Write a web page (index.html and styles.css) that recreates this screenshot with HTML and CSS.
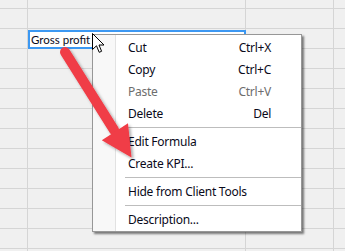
FILE: index.html
```html
<!DOCTYPE html>
<html>
<head>
<meta charset="utf-8">
<link rel="stylesheet" href="styles.css">
</head>
<body>
<div class="sheet">
  <div class="cell">Gross profit Margin</div>

  <div class="menu">
    <div class="item"><span>Cut</span><span class="key">Ctrl+X</span></div>
    <div class="item"><span>Copy</span><span class="key">Ctrl+C</span></div>
    <div class="item disabled"><span>Paste</span><span class="key">Ctrl+V</span></div>
    <div class="item"><span>Delete</span><span class="key">Del</span></div>
    <div class="sep"></div>
    <div class="item"><span>Edit Formula</span></div>
    <div class="item"><span>Create KPI...</span></div>
    <div class="sep"></div>
    <div class="item"><span>Hide from Client Tools</span></div>
    <div class="sep"></div>
    <div class="item"><span>Description...</span></div>
  </div>

  <svg class="cursor" width="13" height="21" viewBox="0 0 13 21">
    <path d="M0.5 0.5 L0.5 16.5 L4.5 12.8 L7.2 19.3 L9.6 18.3 L7 12 L12 12 Z" fill="#fff" stroke="#000" stroke-width="1" stroke-linejoin="miter"/>
  </svg>

  <svg class="arrow" width="345" height="251" viewBox="0 0 345 251">
    <defs>
      <filter id="sh" x="-20%" y="-20%" width="140%" height="140%">
        <feDropShadow dx="2" dy="2" stdDeviation="1.5" flood-color="#000" flood-opacity="0.35"/>
      </filter>
    </defs>
    <g filter="url(#sh)">
      <line x1="65" y1="52" x2="114" y2="130" stroke="#f03c46" stroke-width="10" stroke-linecap="round"/>
      <polygon points="101.8,140.2 128,123.3 131.5,157.5" fill="#f03c46"/>
    </g>
  </svg>
</div>
</body>
</html>
```

FILE: styles.css
```css
html, body {
  margin: 0;
  padding: 0;
}
body {
  width: 345px;
  height: 251px;
  overflow: hidden;
  font-family: "Noto Sans", "Liberation Sans", sans-serif;
}
.sheet {
  position: relative;
  width: 345px;
  height: 251px;
  background-color: #f0f0f0;
  background-image:
    linear-gradient(to right,
      transparent 27px, #d5d5d5 27px, #d5d5d5 28px, transparent 28px,
      transparent 245px, #d5d5d5 245px, #d5d5d5 246px, transparent 246px,
      transparent 333px, #d5d5d5 333px, #d5d5d5 334px, transparent 334px),
    repeating-linear-gradient(to bottom,
      transparent 0, transparent 8px, #d5d5d5 8px, #d5d5d5 9px, transparent 9px, transparent 20px);
  padding-top: 30px;
  box-sizing: border-box;
}
.cell {
  margin-left: 28px;
  width: 218px;
  height: 19px;
  box-sizing: border-box;
  border: 2px solid #3c98f2;
  background: #fff;
  font-family: Lato, "Noto Sans", sans-serif;
  font-size: 11.5px;
  line-height: 16px;
  padding-left: 1px;
  color: #0a0a1a;
  white-space: nowrap;
  overflow: hidden;
}
.menu {
  position: absolute;
  left: 92px;
  top: 34px;
  width: 210px;
  box-sizing: border-box;
  border: 1px solid #979797;
  background: linear-gradient(to right, #f8f8f8 0, #f8f8f8 22px, #e2e2e2 22px, #e2e2e2 23px, #fff 23px);
  padding: 1px 0;
  box-shadow: 2px 2px 2px rgba(0,0,0,0.5);
  font-size: 12px;
  letter-spacing: -0.25px;
  color: #0a0a1a;
}
.item {
  display: flex;
  justify-content: space-between;
  height: 22px;
  line-height: 23px;
  padding: 0 30px 0 35px;
  white-space: nowrap;
}
.item.disabled {
  color: #6d6d6d;
}
.sep {
  height: 6px;
  margin-left: 32px;
  background: linear-gradient(to bottom, transparent 3px, #bdbdbd 3px, #bdbdbd 4px, transparent 4px);
}
.cursor {
  position: absolute;
  left: 92px;
  top: 33px;
}
.arrow {
  position: absolute;
  left: 0;
  top: 0;
  pointer-events: none;
}
```
